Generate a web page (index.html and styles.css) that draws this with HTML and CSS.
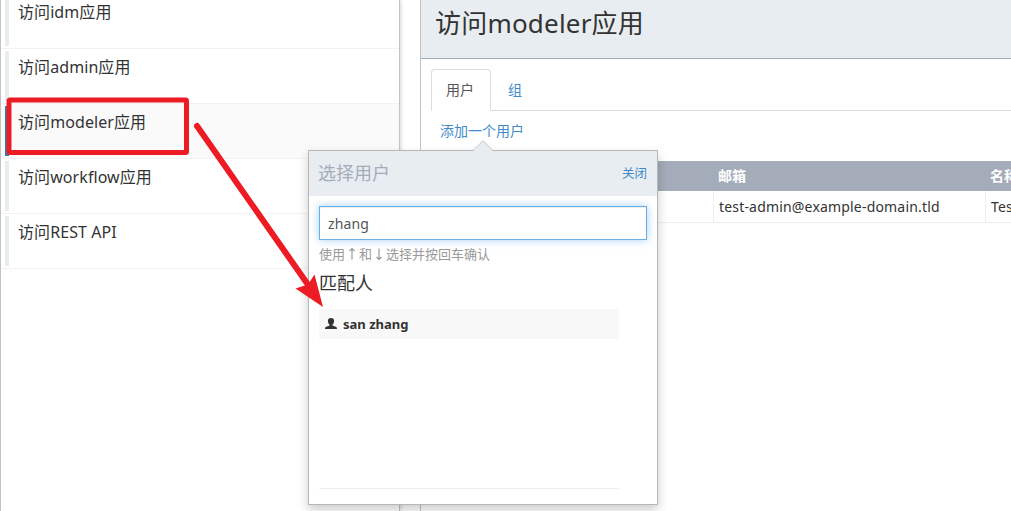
FILE: index.html
```html
<!DOCTYPE html>
<html lang="zh-CN">
<head>
<meta charset="utf-8">
<title>访问modeler应用</title>
<link rel="stylesheet" href="styles.css">
</head>
<body>
<div class="page">
  <ul class="list">
    <li class="item"><span>访问idm应用</span></li>
    <li class="item"><span>访问admin应用</span></li>
    <li class="item active"><span>访问modeler应用</span></li>
    <li class="item"><span>访问workflow应用</span></li>
    <li class="item"><span>访问REST API</span></li>
  </ul>
  <main class="detail">
    <header class="head"><h2>访问modeler应用</h2></header>
    <nav class="tabs"><a class="tab current">用户</a><a class="tab">组</a></nav>
    <a class="add">添加一个用户</a>
    <div class="table">
      <div class="row th"><div></div><div>邮箱</div><div>名称</div></div>
      <div class="row td"><div></div><div><span class="mail">test-admin@example-domain.tld</span></div><div>Test</div></div>
    </div>
  </main>
</div>
<section class="popover">
  <svg class="caret" width="22" height="12" viewBox="0 0 22 12"><path d="M0 12 11 1 22 12Z" fill="#e8edf1"/><path d="M0.500 11 11 .7 21.500 11" fill="none" stroke="#c3c6c8"/></svg>
  <header class="pop-head"><h3>选择用户</h3><a>关闭</a></header>
  <div class="pop-body">
    <div class="input">zhang</div>
    <p class="hint">使用<svg width="14" height="14" viewBox="0 0 14 14"><path d="M7 12.500V1.500M4.500 4 7 1.500 9.500 4"/></svg>和<svg width="14" height="14" viewBox="0 0 14 14"><path d="M7 1.500V12.500M4.500 10 7 12.500 9.500 10"/></svg>选择并按回车确认</p>
    <h4>匹配人</h4>
    <div class="results">
      <div class="person"><svg width="12" height="12" viewBox="0 0 12 12"><path d="M6 0C8 0 9.200 1.200 9.100 3.100 9 4.800 8.400 5.900 7.500 6.600V7.600L10.700 8.700C11.700 9.100 12 9.600 12 11H0C0 9.600.3 9.100 1.300 8.700L4.500 7.600V6.600C3.600 5.900 3 4.800 2.900 3.100 2.800 1.200 4 0 6 0Z" fill="#333"/></svg><b>san zhang</b></div>
    </div>
  </div>
</section>
<svg class="marks" width="1011" height="511" viewBox="0 0 1011 511">
  <rect x="9" y="100" width="177.500" height="52.500" rx="1" fill="none" stroke="#ed1c24" stroke-width="5"/>
  <path d="M197 126 311 289" stroke="#ed1c24" stroke-width="6" stroke-linecap="round"/>
  <path d="M323 307 295.500 288.500 308 284.500 314.500 274.500Z" fill="#ed1c24"/>
</svg>
</body>
</html>
```
FILE: styles.css
```css
* { box-sizing: border-box; }
body { margin: 0; width: 1011px; height: 511px; overflow: hidden; position: relative; background: #fff; color: #333; font: 14px/20px "Noto Sans", "Noto Sans CJK SC", sans-serif; }
h2, h3, h4, p, ul { margin: 0; padding: 0; font-weight: 400; }
.page { display: flex; height: 511px; overflow: hidden; }
.list { list-style: none; width: 400px; flex: none; border: solid #c3c3c3; border-width: 0 1px; box-shadow: 1px 0 4px rgba(0,0,0,.16); margin-right: 20px; }
.item { height: 55px; padding: 2px 0 2px 4px; border-bottom: 1px solid #f2f2f2; font-size: 16px; line-height: 22px; letter-spacing: .08px; }
.item:first-child { height: 49px; padding-top: 0; }
.item span { display: block; height: 50px; border-left: 4px solid #e8edf1; padding: 5px 0 0 9px; }
.item:first-child span { height: 46px; padding-top: 1px; }
.active { background: #fafafa; }
.active span { border-color: #337ab7; }
.detail { flex: 1; min-width: 0; border-left: 1px solid #c3c3c3; }
.head { height: 59px; background: #e8edf1; border-bottom: 1px solid #a4acb9; padding: 5px 0 0 14px; }
.head h2 { font-size: 26px; line-height: 36px; letter-spacing: .2px; }
.tabs { display: flex; height: 42px; margin: 10px 0 0 10px; border-bottom: 1px solid #ddd; }
.tab { height: 42px; padding: 10px 14px; color: #428bca; margin-right: 2px; border: 1px solid transparent; }
.current { width: 60px; color: #555; background: #fff; border-color: #ddd #ddd #fff; border-radius: 4px 4px 0 0; }
.add { display: block; padding: 10px 0 0 19px; color: #428bca; height: 50px; }
.table { margin-left: 10px; width: 700px; }
.row { display: grid; grid-template-columns: 283px 272px 145px; }
.row div { padding: 0 5px; }
.th { background: #a4acb9; color: #fff; font-weight: 700; height: 30px; line-height: 30px; }
.th div { padding-left: 4px; }
.td { height: 32px; line-height: 31px; border-bottom: 1px solid #eee; letter-spacing: .18px; }
.td div { border-right: 1px solid #eee; }
.popover { position: absolute; left: 308px; top: 150px; width: 350px; height: 355px; background: #fff; border: 1px solid #b5b7b9; box-shadow: 0 5px 10px rgba(0,0,0,.2); }
.caret { position: absolute; left: 163px; top: -11px; }
.pop-head { display: flex; justify-content: space-between; height: 45px; padding: 0 10px 0 9px; background: #e8edf1; line-height: 45px; }
.pop-head h3 { font-size: 18px; color: #a4acb9; }
.pop-head a { font-size: 12.5px; color: #428bca; }
.pop-body { padding: 10px; }
.input { height: 34px; border: 1px solid #66afe9; box-shadow: inset 0 1px 1px rgba(0,0,0,.075), 0 0 8px rgba(102,175,233,.6); padding: 7px 8px; color: #555; letter-spacing: .15px; }
.hint { display: flex; align-items: center; font-size: 13px; line-height: 20px; margin-top: 4px; color: #999; }
.hint svg { fill: none; stroke: #999; stroke-width: 1.2; }
.pop-body h4 { font-size: 18px; line-height: 24px; margin-top: 7px; }
.results { width: 300px; height: 180px; margin-top: 14px; border-bottom: 1px solid #eee; }
.person { display: flex; align-items: center; gap: 6px; height: 30px; padding-left: 6px; background: #f8f8f8; font-size: 13px; }
.marks { position: absolute; left: 0; top: 0; }
```
